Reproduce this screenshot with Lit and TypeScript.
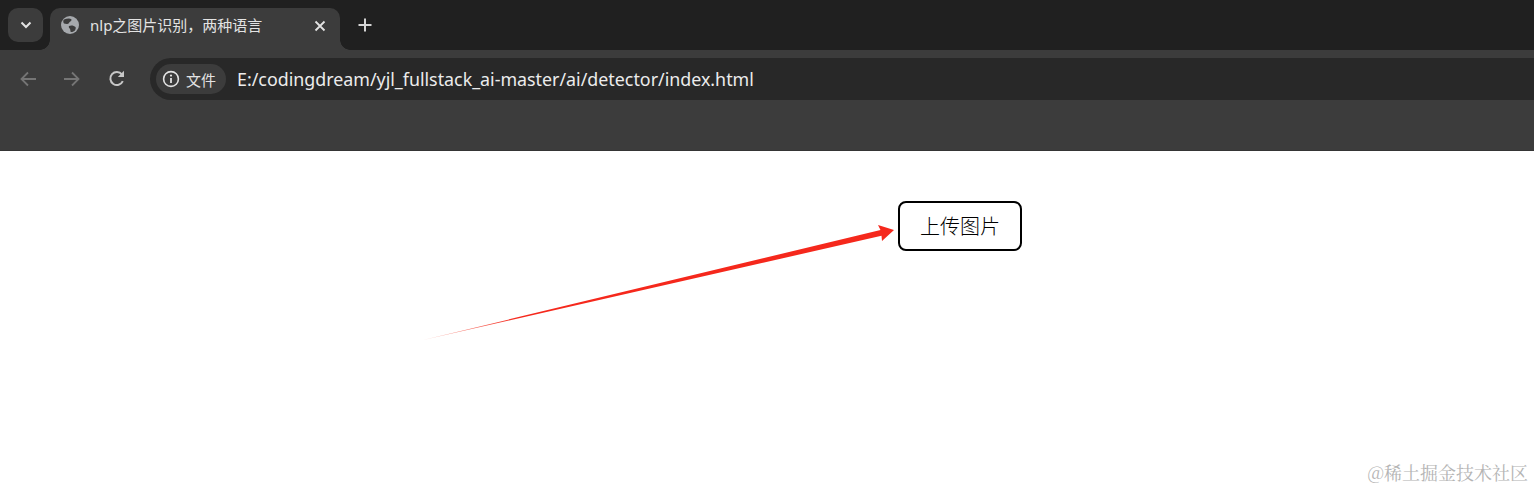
import { LitElement, html, css } from "lit";
import { customElement } from "lit/decorators.js";

@customElement("app-root")
export class AppRoot extends LitElement {
  static styles = css`
    :host { display: block; width: 1534px; height: 492px; overflow: hidden; background: #fff; font-family: "Noto Sans", "Noto Sans CJK SC", sans-serif; }
    * { box-sizing: border-box; }
    svg { display: block; flex: none; }
    .strip { height: 50px; background: #202020; display: flex; align-items: flex-start; padding: 8px 0 0 8px; }
    .tabsearch { width: 35px; height: 34px; border-radius: 10px; background: #3c3c3c; display: flex; align-items: center; justify-content: center; margin-right: 7px; }
    .tab { position: relative; width: 290px; height: 42px; background: #3c3c3c; border-radius: 10px 10px 0 0; display: flex; align-items: flex-start; padding: 7px 0 0 11px; }
    .tab::before, .tab::after { content: ""; position: absolute; bottom: 0; width: 10px; height: 10px; }
    .tab::before { left: -10px; background: radial-gradient(circle at 0 0, transparent 9.5px, #3c3c3c 10px); }
    .tab::after { right: -10px; background: radial-gradient(circle at 100% 0, transparent 9.5px, #3c3c3c 10px); }
    .fav { margin: 1px 11px 0 0; }
    .title { font-size: 15px; line-height: 20px; color: #e3e3e3; width: 200px; white-space: nowrap; }
    .close { margin-left: 23px; margin-top: 4px; }
    .plus { margin: 8px 0 0 17px; }
    .toolbar { height: 101px; background: #3c3c3c; padding-top: 8px; border-bottom: 1px solid #353535; display: flex; align-items: flex-start; }
    .nav { display: flex; width: 150px; height: 42px; padding-left: 18px; gap: 24px; align-items: center; }
    .nav .reload { margin-left: 1px; }
    .omni { flex: 1; height: 42px; background: #282828; border-radius: 21px 0 0 21px; display: flex; align-items: center; padding-left: 6px; }
    .chip { height: 30px; width: 70px; border-radius: 15px; background: #3c3c3c; display: flex; align-items: center; padding-left: 6px; gap: 6px; font-size: 15px; color: #e3e3e3; }
    .url { margin-left: 11px; font-size: 17.83px; color: #ececec; white-space: nowrap; line-height: 42px; }
    .page { position: relative; height: 341px; padding: 50px 0 0 898px; }
    .upload { width: 124px; height: 50px; border: 2px solid #000; border-radius: 8px; background: #fff; color: #000; font-family: inherit; font-size: 20px; font-weight: 300; padding: 0; display: block; line-height: 48px; text-align: center; }
    .arrow { position: absolute; left: 0; top: 0; }
    .mark { position: absolute; right: 6px; bottom: 8px; font-size: 18px; line-height: 24px; color: #b4b4b4; white-space: nowrap; font-family: "Noto Serif CJK SC", "Noto Sans CJK SC", sans-serif; }
  `;

  render() {
    return html`
      <div class="strip">
        <div class="tabsearch">
          <svg width="12" height="8" viewBox="0 0 12 8"><path d="M1.5 1.5 6 6l4.5-4.5" fill="none" stroke="#e3e3e3" stroke-width="2"/></svg>
        </div>
        <div class="tab">
          <svg class="fav" width="18" height="18" viewBox="0 0 18 18">
            <circle cx="9" cy="9" r="9" fill="#a6a9ad"/>
            <path d="M3 3.5C6 2.5 9 2 10.5 3.5 11 5 8.5 5.5 8 7 7 8.5 4.5 8 3 7.5 2 6 2 4.5 3 3.5ZM8 10c2-1 5-.5 6.5 1 .5 1 .2 2.5-.8 3.7-1.5 1.2-3 1.6-4 1.3-.5-1.5-.2-2.5-1-3.5-.8-.8-1.2-1.7-.7-2.5Z" fill="#3c3c3c"/>
          </svg>
          <span class="title">nlp之图片识别，两种语言</span>
          <svg class="close" width="14" height="14" viewBox="0 0 14 14"><path d="M2.5 2.5l9 9m0-9-9 9" stroke="#e3e3e3" stroke-width="1.8" fill="none"/></svg>
        </div>
        <svg class="plus" width="16" height="18" viewBox="0 0 16 18"><path d="M8 2.5v13M1.5 9h13" stroke="#d5d5d5" stroke-width="2" fill="none"/></svg>
      </div>
      <div class="toolbar">
        <div class="nav">
          <svg width="20" height="20" viewBox="0 0 20 20"><path d="M18 10H3.5M10 3.5 3.5 10l6.5 6.5" fill="none" stroke="#757575" stroke-width="1.8"/></svg>
          <svg width="20" height="20" viewBox="0 0 20 20"><path d="M2 10h14.5M10 3.5l6.5 6.5-6.5 6.5" fill="none" stroke="#757575" stroke-width="1.8"/></svg>
          <svg class="reload" width="20" height="20" viewBox="0 0 20 20"><path d="M15.8 12.2a6.5 6.5 0 1 1-.9-6.8" fill="none" stroke="#c8c8c8" stroke-width="2"/><path d="M17 1.8v6.2h-6.2z" fill="#c8c8c8"/></svg>
        </div>
        <div class="omni">
          <div class="chip">
            <svg width="18" height="18" viewBox="0 0 18 18"><circle cx="9" cy="9" r="7.4" fill="none" stroke="#e3e3e3" stroke-width="1.6"/><path d="M9 8v5" stroke="#e3e3e3" stroke-width="1.8"/><circle cx="9" cy="5.6" r="1.1" fill="#e3e3e3"/></svg>
            <span>文件</span>
          </div>
          <span class="url">E:/codingdream/yjl_fullstack_ai-master/ai/detector/index.html</span>
        </div>
      </div>
      <div class="page">
        <button class="upload">上传图片</button>
        <svg class="arrow" width="1534" height="341" viewBox="0 151 1534 341">
          <defs>
            <linearGradient id="fade" gradientUnits="userSpaceOnUse" x1="423" y1="340" x2="520" y2="314">
              <stop offset="0" stop-color="#f7a69c"/><stop offset="1" stop-color="#f5281c"/>
            </linearGradient>
          </defs>
          <path d="M422 340.3 880.5 230 878 225 894 230 882 241 881.5 235.8Z" fill="url(#fade)"/>
        </svg>
        <div class="mark">@稀土掘金技术社区</div>
      </div>
    `;
  }
}
